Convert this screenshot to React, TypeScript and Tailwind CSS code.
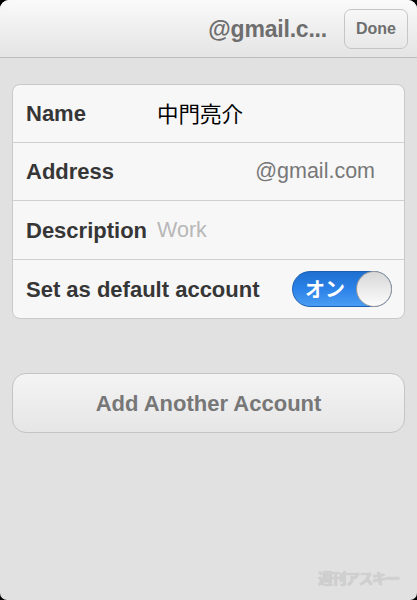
import React from "react";

export default function App() {
  const font = { fontFamily: '"Liberation Sans", Arial, "Noto Sans CJK JP", sans-serif' };
  return (
    <div className="w-[417px] h-[600px] bg-black" style={font}>
      <div className="w-[417px] h-[600px] bg-[#e1e1e1] rounded-t-[9px] rounded-b-[7px] overflow-hidden flex flex-col">
        <div className="h-[58px] shrink-0 flex items-center justify-end pr-[9px] border-b border-[#bdbdbd] bg-gradient-to-b from-[#fafafa] to-[#e4e4e4]">
          <div className="text-[23px] font-bold text-[#6e6e6e] mr-[17px] mt-[1px] tracking-[-0.2px]">@gmail.c...</div>
          <div className="w-[64px] h-[40px] rounded-[7px] border border-[#c6c6c6] bg-gradient-to-b from-[#f7f7f7] to-[#e8e8e8] flex items-center justify-center text-[16px] font-bold text-[#6e6e6e]">
            Done
          </div>
        </div>
        <div className="px-[12px] pt-[26px]">
          <div className="rounded-[8px] border border-[#c9c9c9] bg-[#f7f7f7] overflow-hidden">
            <div className="h-[58px] flex items-center pl-[13px] border-b border-[#cfcfcf]">
              <span className="w-[131px] text-[22px] font-bold text-[#363636]">Name</span>
              <span className="text-[21.5px] text-black" style={{ fontFamily: '"Noto Sans CJK JP", sans-serif' }}>中門亮介</span>
            </div>
            <div className="h-[58px] flex items-center justify-between pl-[13px] pr-[29px] border-b border-[#cfcfcf]">
              <span className="text-[22px] font-bold text-[#363636]">Address</span>
              <span className="text-[21.5px] text-[#777]">@gmail.com</span>
            </div>
            <div className="h-[59px] flex items-center pl-[13px] border-b border-[#cfcfcf]">
              <span className="text-[22px] font-bold text-[#363636] mr-[10px]">Description</span>
              <span className="text-[21.5px] text-[#b8b8b8]">Work</span>
            </div>
            <div className="h-[58px] flex items-center justify-between pl-[13px] pr-[12px]">
              <span className="text-[22px] font-bold text-[#363636]">Set as default account</span>
              <div className="relative w-[100px] h-[36px] rounded-full bg-gradient-to-b from-[#1f6fd0] via-[#2b82e8] to-[#4a9df2] border border-[#1b5fb3] flex items-center">
                <span className="ml-[12px] text-[20px] font-bold text-white" style={{ fontFamily: '"Noto Sans CJK JP", sans-serif' }}>オン</span>
                <div className="absolute right-[-1px] top-[-1px] w-[36px] h-[36px] rounded-full border border-[#9a9a9a] bg-gradient-to-b from-[#d8d8d8] to-[#fcfcfc]" />
              </div>
            </div>
          </div>
          <div className="mt-[54px] h-[60px] rounded-[14px] border border-[#c4c4c4] bg-gradient-to-b from-[#f4f4f4] to-[#e6e6e6] flex items-center justify-center text-[22px] font-bold text-[#777]">
            Add Another Account
          </div>
        </div>
        <div className="flex-1" />
        <div className="flex justify-end pr-[18px] pb-[11px]">
          <span className="text-[15px] font-bold text-[#d0d0d0] tracking-[-1.5px]" style={{ fontFamily: '"Noto Sans CJK JP", sans-serif', textShadow: "0 0 1px #bbb" }}>週刊アスキー</span>
        </div>
      </div>
    </div>
  );
}
